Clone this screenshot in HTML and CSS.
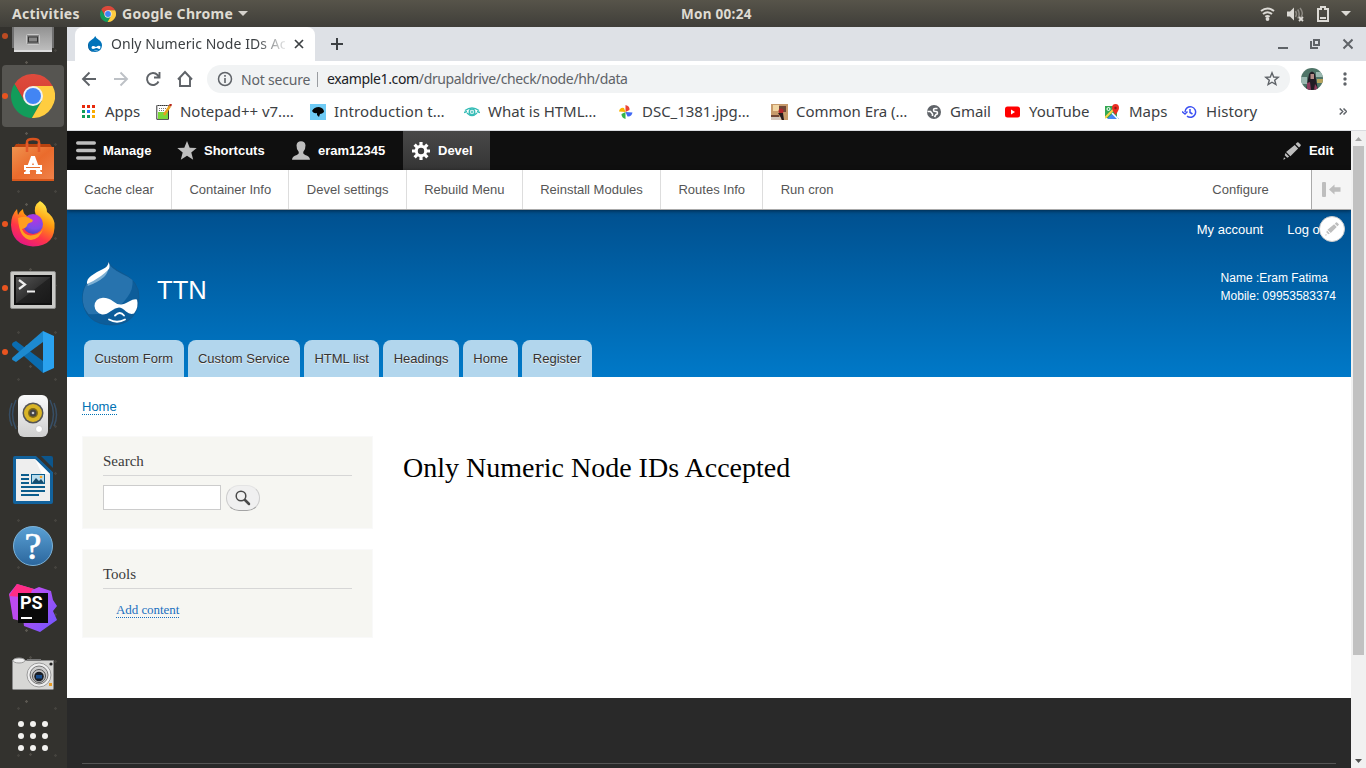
FILE: index.html
```html
<!DOCTYPE html>
<html lang="en">
<head>
<meta charset="utf-8">
<title>Only Numeric Node IDs Accepted</title>
<link rel="stylesheet" href="styles.css">
</head>
<body>
<svg class="defs" width="0" height="0" aria-hidden="true">
  <defs>
    <linearGradient id="gRed" x1="0" y1="0" x2="0" y2="1"><stop offset="0" stop-color="#de4b3d"/><stop offset="1" stop-color="#d63f31"/></linearGradient>
    <linearGradient id="gGrey" x1="0" y1="0" x2="0" y2="1"><stop offset="0" stop-color="#777"/><stop offset="1" stop-color="#bdbdbd"/></linearGradient>
    <linearGradient id="gBag" x1="0" y1="0" x2="1" y2="1"><stop offset="0" stop-color="#f0934f"/><stop offset=".5" stop-color="#ea6b2c"/><stop offset="1" stop-color="#f0824a"/></linearGradient>
    <linearGradient id="gFox" x1=".8" y1="0" x2=".3" y2="1"><stop offset="0" stop-color="#fff44f"/><stop offset=".4" stop-color="#ff980e"/><stop offset=".7" stop-color="#ff3647"/><stop offset="1" stop-color="#e31587"/></linearGradient>
    <radialGradient id="gGlobe" cx=".6" cy=".2" r=".9"><stop offset="0" stop-color="#b833e1"/><stop offset=".6" stop-color="#7b4be8"/><stop offset="1" stop-color="#4a3cb8"/></radialGradient>
    <linearGradient id="gTerm" x1="0" y1="0" x2="1" y2="1"><stop offset="0" stop-color="#555"/><stop offset=".5" stop-color="#333"/><stop offset=".52" stop-color="#222"/><stop offset="1" stop-color="#191919"/></linearGradient>
    <linearGradient id="gWhite" x1="0" y1="0" x2="0" y2="1"><stop offset="0" stop-color="#fafafa"/><stop offset="1" stop-color="#cfcfcf"/></linearGradient>
    <linearGradient id="gHelp" x1="0" y1="0" x2="0" y2="1"><stop offset="0" stop-color="#5aa0d4"/><stop offset="1" stop-color="#2b669d"/></linearGradient>
    <linearGradient id="gPs" x1="0" y1="0" x2="1" y2="1"><stop offset="0" stop-color="#d04cf0"/><stop offset="1" stop-color="#6b57ff"/></linearGradient>
    <symbol id="chrome" viewBox="2 2 44 44">
      <path fill="url(#gRed)" d="M24 14H43.6A22 22 0 0 0 5.54 12.03L15.34 29Z"/>
      <path fill="#129c5a" d="M32.66 29L15.34 29 5.54 12.03A22 22 0 0 0 22.86 45.97Z"/>
      <path fill="#ffcd40" d="M24 14H43.6A22 22 0 0 1 22.86 45.97L32.66 29Z"/>
      <circle cx="24" cy="24" r="10" fill="#f1f1f1"/><circle cx="24" cy="24" r="8" fill="#4285f4"/>
    </symbol>
    <symbol id="pencil" viewBox="0 0 18 18">
      <path d="M12.6 2.1l1.5-1.5q.7-.7 1.4 0l2 2q.7.7 0 1.4L16 5.500zM11.700 3l3.400 3.400-7.700 7.900-4.300-4.200zM2.500 11l3.700 3.800-2 .9-2.500-2.500zM1 15.300l1.600 1.400-2.300 1z"/>
    </symbol>
  </defs>
</svg>

<header class="topbar">
  <span class="activities">Activities</span>
  <svg class="app-icon" width="16" height="16"><use href="#chrome"/></svg>
  <span class="app-name">Google Chrome</span>
  <svg class="app-caret" width="10" height="6"><path fill="#d5d2cc" d="M0 0h10L5 5z"/></svg>
  <span class="clock">Mon 00:24</span>
  <svg class="tray-icons" width="94" height="18" viewBox="0 0 94 18">
    <g fill="none" stroke="#dcdad5" stroke-width="2"><path d="M1 6q6.500-5 13 0M3 9q4.500-3.500 9 0M5.300 11.800q2.200-1.600 4.400 0"/></g>
    <circle cx="7.500" cy="14" r="1.900" fill="#dcdad5"/>
    <path fill="#dcdad5" d="M27 6.500h3l4-4v13l-4-4h-3z"/>
    <g fill="none" stroke="#8b8881" stroke-width="1.500"><path d="M35.500 6q2 3 0 6M37.700 4.500q3 4.500 0 9M40 3q4 5 1 9"/></g>
    <path stroke="#dcdad5" stroke-width="1.800" d="M39 12l4 4m0-4l-4 4"/>
    <path fill="none" stroke="#dcdad5" stroke-width="2" d="M61 4V2h4v2h3v12H58V4z"/>
    <path fill="#dcdad5" d="M60 12h6v2h-6zM81 6h10l-5 5z"/>
  </svg>
</header>

<div class="desktop">
  <nav class="dock">
    <div class="dock-item files"><i class="dot"></i><svg width="44" height="44" viewBox="0 0 44 44"><path fill="#6f6f6f" d="M1 6h42v33H1z"/><path fill="url(#gGrey)" d="M3 4h38v37H3z"/><path fill="#ddd" d="M3 41h38v2H3z"/><rect x="15.500" y="25.500" width="13" height="10" rx="1" fill="#888" stroke="#c9c9c9"/><rect x="17.500" y="28" width="9" height="5" fill="none" stroke="#333"/></svg></div>
    <div class="dock-item active"><i class="dot"></i><svg width="44" height="44"><use href="#chrome"/></svg></div>
    <div class="dock-item store"><svg width="44" height="46" viewBox="0 0 44 46"><path fill="#b9420f" d="M5 8h34l4 6H1z"/><path fill="none" stroke="#d9531e" stroke-width="2.500" d="M16 17V6q0-3 6-3t6 3v11"/><path fill="url(#gBag)" d="M1 11h42v33H1z"/><path fill="#d8581c" d="M1 43h42v2H1z"/><path fill="none" stroke="#e4592a" stroke-width="2.500" d="M16 16V7m12 9V7"/><path fill="none" stroke="#fff" stroke-width="4" d="M16 37l5.500-15h1L28 37"/><path fill="#fff" d="M13 29h18v5H13zM13 36h6v2h-6zM25 36h6v2h-6z"/><path fill="#e8702f" d="M15 31h14v1H15z"/></svg></div>
    <div class="dock-item store"><i class="dot"></i><svg width="46" height="47" viewBox="0 0 46 47"><path fill="url(#gFox)" d="M30 1q7 4 7 11 6 4 7.500 11Q46 46 23 46.500 2 45 1 25 1 15 7 9l1 6q2-4 5-6 0 5 4 7 5-1 9 0-4-10 4-15"/><circle cx="23" cy="24" r="10" fill="url(#gGlobe)"/><path fill="#ff9d20" d="M8 18q9-3 13 1 3 1 1 3-5 1-5 4-2 3-5 3 3 8 12 6 6-1 9-6-3 10-12 11Q9 39 8 18"/></svg></div>
    <div class="dock-item low"><i class="dot"></i><svg width="46" height="38" viewBox="0 1 46 38"><rect x=".5" y="1.500" width="45" height="37" rx="1.500" fill="#c9c9c6" stroke="#8d8d8b"/><rect x="4" y="5" width="38" height="30" fill="#111"/><rect x="6" y="7" width="34" height="26" fill="url(#gTerm)"/><path fill="none" stroke="#eee" stroke-width="2.200" d="M9 10l6 4.500-6 4.500M17 21.500h8"/></svg></div>
    <div class="dock-item"><i class="dot"></i><svg width="44" height="44" viewBox="0 0 44 44"><path fill="#0a6cb0" d="M1 14.500q0-1 1-2L5 11l27 20v12L1.500 16z"/><path fill="#1d8ad0" d="M1 28.500q0 1 .500 1.500L5 32 32 12V1L1.500 27.500z"/><path fill="#2aa2ef" d="M32 1l11 5v32l-11 5z"/></svg></div>
    <div class="dock-item"><svg width="50" height="46" viewBox="0 0 50 46"><g fill="none" stroke="#3a5878" stroke-width="1.500" opacity=".75"><path d="M8 7q-7 14 0 29M4 10q-5 12 0 23M42 7q7 14 0 29M46 10q5 12 0 23"/></g><rect x="10" y="2" width="30" height="42" rx="6" fill="url(#gWhite)"/><circle cx="25" cy="20" r="10.500" fill="#555"/><circle cx="25" cy="20" r="9" fill="#d9b526"/><circle cx="25" cy="20" r="5" fill="#846c15"/><circle cx="25" cy="20" r="3.500" fill="#444"/><circle cx="25" cy="20" r="1.300" fill="#ccc"/><circle cx="31" cy="36" r="3.500" fill="#fff" stroke="#ccc"/></svg></div>
    <div class="dock-item"><svg width="40" height="48" viewBox="0 0 40 48"><path fill="#12629c" d="M2 0h22l16 16v30q0 2-2 2H2q-2 0-2-2V2q0-2 2-2z"/><path fill="#33322f" d="M23 0h17v16z"/><path fill="#0d568c" d="M28 0h10q2 0 2 2v10z"/><path fill="#eee" d="M3 3h19l15 15v27H3z"/><path fill="#fff" d="M22 3l15 15H29z"/><path fill="#0c5d8d" d="M8 18h8v2H8zM8 22h8v2H8zM8 26h8v2H8zM8 30h24v2H8zM8 34h24v2H8zM8 38h18v2H8zM18 18h14v10H18z"/><path fill="#b9dced" d="M19 19h12v8H19z"/><path fill="#174b6d" d="M19 27l4-5 3 3 2-2 3 4z"/><circle cx="28" cy="21" r="1.300" fill="#ffa928"/></svg></div>
    <div class="dock-item low"><svg width="42" height="42" viewBox="0 0 42 42"><circle cx="21" cy="21" r="19.500" fill="url(#gHelp)" stroke="#7db3d9"/><text x="21" y="33.500" text-anchor="middle" class="help-mark">?</text></svg></div>
    <div class="dock-item"><svg width="50" height="50" viewBox="0 0 50 50"><path fill="#bd4af0" d="M1 11L9 1l17 5-2 35-19-5z"/><path fill="#ff2d84" d="M1 13L9 1l17 5v9z"/><path fill="url(#gPs)" d="M24 7l7-3 12 4 2 9 4 6-4 5 4 9-17 12-16-6-1-8z"/><path fill="#090909" d="M10 10h30v30H10z"/><text x="12" y="26" class="ps-mark">PS</text><path fill="#fff" d="M13 34h11v2H13z"/></svg></div>
    <div class="dock-item low"><svg width="44" height="34" viewBox="0 0 44 34"><path fill="#d7d7d5" stroke="#888" d="M1.500 3.500h41v28q0 1-1 1h-39q-1 0-1-1z"/><ellipse cx="8" cy="3.500" rx="6" ry="2.500" fill="#eee" stroke="#999"/><path fill="#777" d="M16 2h14v2H16z"/><circle cx="28" cy="18" r="12" fill="#eee" stroke="#9b9b9b"/><circle cx="28" cy="18" r="9" fill="#ccc" stroke="#777"/><circle cx="28" cy="19" r="6.500" fill="#c4c4c4" stroke="#555"/><circle cx="28" cy="19.500" r="4.800" fill="#191d24"/><rect x="25" y="18" width="6" height="3.500" fill="#174c8c"/><circle cx="40" cy="7" r="1.600" fill="#222"/><rect x="38" y="26" width="3" height="3" fill="#e79b24"/></svg></div>
    <div class="dock-item"><svg width="32" height="32" viewBox="0 0 32 32" fill="#f2f1ef"><circle cx="4" cy="4" r="3"/><circle cx="16" cy="4" r="3"/><circle cx="28" cy="4" r="3"/><circle cx="4" cy="16" r="3"/><circle cx="16" cy="16" r="3"/><circle cx="28" cy="16" r="3"/><circle cx="4" cy="28" r="3"/><circle cx="16" cy="28" r="3"/><circle cx="28" cy="28" r="3"/></svg></div>
  </nav>

  <main class="browser">
    <div class="tabstrip">
      <div class="tab">
        <svg width="14" height="16" viewBox="0 0 14 16"><path fill="#0073ba" d="M7.200 0Q8 2.500 11 4q3 2 3 5.500Q13.500 16 7 16 .5 16 0 9.500 0 6 3 4.200 6.500 2.500 7.200 0z"/><path fill="#004f8a" d="M1 6q-2 8 5 10-6 0-6-7z"/><path fill="#fff" d="M3.500 11.500q.5-2.500 4.500-.5 3-2 4.500-.5 0 3-1.500 2.500-2-1.500-3-1-4.500 2-4.500-.5M6 14.300q2 .8 4 0l-1 .8H7z"/></svg>
        <span class="tab-title">Only Numeric Node IDs Accepted</span>
        <svg width="10" height="10" viewBox="0 0 10 10"><path stroke="#3c4043" stroke-width="1.700" d="M1 1l8 8M9 1L1 9"/></svg>
      </div>
      <svg class="new-tab" width="12" height="12" viewBox="0 0 12 12"><path stroke="#3c4043" stroke-width="2" d="M6 0v12M0 6h12"/></svg>
      <svg class="window-buttons" width="76" height="12" viewBox="0 0 76 12"><g fill="none" stroke="#5f6368" stroke-width="2"><path d="M1 10h10M37 2h5v5h-5zM34 3v7h7"/><path d="M66.500 1.500l9 9m0-9l-9 9"/></g></svg>
    </div>

    <div class="toolbar">
      <svg class="nav-icons" width="112" height="20" viewBox="0 0 112 20" fill="none" stroke="#5f6368" stroke-width="1.900"><path d="M15 10H2M8.500 3.500L2 10l6.500 6.500"/><path stroke="#bdc1c6" d="M33 10h13M39.500 3.500L46 10l-6.500 6.500"/><path d="M77.500 12.500A6 6 0 1 1 76.500 6l1.500 2M78.500 3v5.500H73"/><path d="M97 10.500L104 3l7 7.500M99 9v8h10V9"/></svg>
      <div class="omnibox">
        <svg width="16" height="16" viewBox="0 0 16 16"><circle cx="8" cy="8" r="6.500" fill="none" stroke="#5f6368" stroke-width="1.500"/><path fill="#5f6368" d="M7.200 7h1.600v5H7.200zM7.200 4h1.600v1.700H7.200z"/></svg>
        <span class="not-secure">Not secure</span>
        <span class="url"><b>example1.com</b><span class="url-path">/drupaldrive/check/node/hh/data</span></span>
        <svg class="star" width="16" height="16" viewBox="0 0 16 16"><path fill="none" stroke="#5f6368" stroke-width="1.400" d="M8 1.800l1.700 4.200 4.500.3-3.500 2.900 1.200 4.400L8 11.200l-3.900 2.400 1.200-4.400-3.500-2.900 4.500-.3z"/></svg>
      </div>
      <svg class="avatar" width="22" height="22" viewBox="0 0 22 22"><clipPath id="av"><circle cx="11" cy="11" r="11"/></clipPath><g clip-path="url(#av)"><path fill="#4e7467" d="M0 0h22v22H0z"/><path fill="#9ab8b0" d="M0 9h6v7H0zM15 4h7v5h-7z"/><path fill="#b7a35c" d="M16 11h6v4h-6z"/><path fill="#201b24" d="M8 6q3-5 6 0l3 16H5z"/><path fill="#b28b87" d="M9.500 6h3.500v5H9.500z"/><path fill="#8d3a5c" d="M6 15l3-1 1 8H6zM14 16l2 3v3h-3z"/></g></svg>
      <svg class="kebab" width="4" height="14" viewBox="0 0 4 14" fill="#5f6368"><circle cx="2" cy="2" r="1.700"/><circle cx="2" cy="7" r="1.700"/><circle cx="2" cy="12" r="1.700"/></svg>
    </div>

    <div class="bookmarks">
      <div class="bm bm-apps"><svg width="14" height="14" viewBox="0 0 14 14"><path fill="#e8290b" d="M0 0h3v3H0zM5 0h3v3H5zM10 0h3v3h-3z"/><path fill="#0f9d58" d="M0 5h3v3H0zM0 10h3v3H0zM5 10h3v3H5z"/><path fill="#2979ff" d="M5 5h3v3H5z"/><path fill="#f9ab00" d="M10 5h3v3h-3zM10 10h3v3h-3z"/></svg><span>Apps</span></div>
      <div class="bm bm-wide"><svg width="16" height="16" viewBox="0 0 16 16"><path fill="#fff" stroke="#333" d="M.8 1.500h11.700v13.800H.8z"/><path fill="#79d93a" d="M2 8h10v7H2z"/><path stroke="#777" stroke-dasharray="1 1" d="M1 1.500h12M3 4.500h7M3 6.500h6"/><path stroke="#e8a11c" stroke-width="2.500" d="M14 2l-6 9"/><path stroke="#b7281c" stroke-width="2.500" d="M15 0l-1 2"/></svg><span>Notepad++ v7.…</span></div>
      <div class="bm bm-wide"><svg width="16" height="16" viewBox="0 0 16 16"><path fill="#6fcbf5" d="M0 0h16v16H0z"/><path fill="#050505" d="M2 7q2-4 7-4 5 1 5 5-2 2-4 2l-1 3-2-2V9q-3 1-5-2"/></svg><span class="t-intro">Introduction t…</span></div>
      <div class="bm bm-wide"><svg width="16" height="16" viewBox="0 0 16 16" fill="none" stroke="#35bcb6"><path stroke-width="1.400" d="M1 6.500q7-5 14 0M3 9q5 5 10 0M0 8.500l3-1m13 1l-3-1"/><circle cx="8" cy="8" r="2.800" stroke-width="1.300"/><circle cx="8" cy="8" r="1"/></svg><span>What is HTML…</span></div>
      <div class="bm bm-dsc"><svg width="16" height="16" viewBox="0 0 16 16"><path fill="#ea4335" d="M7.500 1Q12 2 11.500 6L7.500 8z"/><path fill="#4169f5" d="M14.500 8.500q-1 4.500-5 4l-2-4.500z"/><path fill="#34b44a" d="M7.500 15q-4-1-4-5l4-2z"/><path fill="#fbb400" d="M1 7.500q1-4.500 5-3.500l1.500 4z"/></svg><span>DSC_1381.jpg…</span></div>
      <div class="bm bm-era"><svg width="17" height="16" viewBox="0 0 17 16"><path fill="#c79a6b" d="M0 0h17v16H0z"/><path fill="#f1d5a2" d="M2 1h6v6H2z"/><path fill="#704636" d="M8 2h7v6H8zM0 11h8v2H0z"/><path fill="#d4c7be" d="M0 13h10v3H0z"/><circle cx="10" cy="7" r="2.500" fill="#b2262b"/><path fill="#271a1d" d="M7 9h5l1 7h-2l-2-4z"/></svg><span>Common Era (…</span></div>
      <div class="bm bm-gmail"><svg width="16" height="16" viewBox="0 0 16 16"><circle cx="8" cy="8" r="7" fill="#5f6368"/><path fill="none" stroke="#fff" stroke-width="1.600" d="M11.500 4.500H9q-1.500 0-1.500 1.500T9 7.500h1q1.500 0 1.500 1.500T10 10.500L8.500 13M1.500 7.500h3l2 2.500v2"/></svg><span>Gmail</span></div>
      <div class="bm bm-yt"><svg width="16" height="16" viewBox="0 0 16 16"><rect y="2.500" width="15" height="11" rx="2.500" fill="#f00"/><path fill="#fff" d="M6 5.500v5L10 8z"/></svg><span>YouTube</span></div>
      <div class="bm bm-maps"><svg width="16" height="16" viewBox="0 0 16 16"><path fill="#34a853" d="M0 2h12v12H0z"/><path fill="#4285f4" d="M2 15l6-6 6 6z"/><path stroke="#fbd34b" stroke-width="2" d="M0 14L10 4"/><path stroke="#fff" stroke-width="1.500" d="M7 9l6 6"/><circle cx="3.500" cy="5" r="1.500" fill="none" stroke="#fff"/><path fill="#ea2e22" d="M7 4q0-4 3.500-4T14 4q0 2-3.500 7Q7 6 7 4"/><circle cx="10.500" cy="4" r="1.200" fill="#8e1714"/></svg><span>Maps</span></div>
      <div class="bm"><svg width="16" height="16" viewBox="0 0 16 16" fill="none" stroke="#3b50f2" stroke-width="1.500"><path d="M3 8a5.300 5.300 0 1 1 2 4.200M0 7.500L3 10l2.500-2.500M8 5v3.500l2.500 1.500"/></svg><span class="t-intro">History</span></div>
      <svg class="overflow" width="8" height="7" viewBox="0 0 8 7"><path fill="none" stroke="#5f6368" stroke-width="1.500" d="M.7.500l3 3-3 3M4.500.500l3 3-3 3"/></svg>
    </div>

    <div class="viewport">
      <div class="page">
        <nav class="admin-bar">
          <a class="manage"><svg width="20" height="19" viewBox="0 0 20 19"><path stroke="#bebebe" stroke-width="3.400" stroke-linecap="round" d="M1.700 2h16.600M1.700 9.500h16.600M1.700 17h16.600"/></svg>Manage</a>
          <a class="shortcuts"><svg width="20" height="20" viewBox="0 0 20 20"><path fill="#bebebe" d="M10 0l2.700 6.800 7 .3-5.400 4.500 1.900 7.200-6.200-4-6.200 4 1.900-7.200L.3 7.100l7-.3z"/></svg>Shortcuts</a>
          <a class="user"><svg width="20" height="20" viewBox="0 0 20 20"><path fill="#bebebe" d="M10 .3q4 0 4.500 4 .2 4-2.300 6.700-.5 2 2 3 4.500 1 4.800 4.800H1q.3-3.800 4.800-4.800 2.500-1 2-3Q5.300 8.300 5.500 4.300q.5-4 4.500-4"/></svg>eram12345</a>
          <a class="devel"><svg width="18" height="18" viewBox="0 0 18 18"><circle cx="9" cy="9" r="4.700" fill="none" stroke="#fff" stroke-width="3"/><path stroke="#fff" stroke-width="3.200" d="M9 0v4M9 14v4M0 9h4M14 9h4M2.600 2.600l2.700 2.700M12.700 12.700l2.700 2.700M15.400 2.600l-2.700 2.700M5.300 12.700l-2.700 2.700"/></svg>Devel</a>
          <a class="edit"><svg width="18" height="18" fill="#bebebe"><use href="#pencil"/></svg>Edit</a>
        </nav>
        <nav class="tray">
          <a>Cache clear</a><a>Container Info</a><a>Devel settings</a><a>Rebuild Menu</a><a>Reinstall Modules</a><a>Routes Info</a><a>Run cron</a>
          <a class="configure">Configure</a>
          <span class="orientation"><svg width="20" height="16" viewBox="0 0 20 16" fill="#bebebe"><rect x="1" y="0" width="4" height="15" rx="1"/><path d="M8 7.500L13.500 2.500v2.700H19.500v4.600h-6v2.700z"/></svg></span>
        </nav>
        <header class="site-header">
          <div class="account"><a>My account</a><a class="logout">Log out</a><span class="contextual"><svg width="14" height="14" fill="#bebebe"><use href="#pencil"/></svg></span></div>
          <div class="branding">
            <svg width="58" height="65" viewBox="0 0 58 65"><path fill="#0d5d9a" stroke="#14568a" stroke-width=".7" d="M27 1q1 5 13 11 17 8 17 24Q56 64 29 64 2 63 .500 37 .500 22 14 13.500 26 7 27 1z"/><path fill="#2773ae" d="M27 2q1 5 13 11 7 3 10.500 6 1 9-5 17-8 12-19 15-10 3-20 2Q.500 46 .700 37 1 22 14 14 26 8 27 2z"/><path fill="#7db0d4" d="M5.500 25Q15 22 22 16q4-4 4-8L6 22z"/><path fill="#fff" d="M5 23Q4.500 18 9 15q5-4 12-7 5-2 5.700-7 2 6-.7 8-3 3-7 6-7 5-14 8zM12.500 45Q13 37 21 36.700q6 0 10 3.500t8 3.300q3 0 8-3 5-3 8-2 2 8-3 14-4 1.500-8-2-4-4-7-4-4 0-8 3.500-5 4-9 3.500-7-2-7.500-8.500"/><path fill="none" stroke="#fff" stroke-width="1.800" stroke-linecap="round" d="M33 54.500q5-5 9 0M27 58.500q8 4.500 16 0"/></svg>
            <h1>TTN</h1>
            <p>Name :Eram Fatima<br>Mobile: 09953583374</p>
          </div>
          <nav class="menu"><a>Custom Form</a><a>Custom Service</a><a>HTML list</a><a>Headings</a><a>Home</a><a>Register</a></nav>
        </header>
        <div class="breadcrumb"><a>Home</a></div>
        <div class="columns">
          <aside>
            <section class="block search"><h2>Search</h2><div class="search-row"><input type="text" aria-label="Search"><button aria-label="Search"><svg width="16" height="16" viewBox="0 0 16 16" fill="none" stroke="#4a4a4a"><circle cx="6" cy="6" r="4.800" stroke-width="1.500"/><path stroke-width="2.500" stroke-linecap="round" d="M10 10l4 4"/></svg></button></div></section>
            <section class="block tools"><h2>Tools</h2><a>Add content</a></section>
          </aside>
          <article>Only Numeric Node IDs Accepted</article>
        </div>
        <footer><div></div></footer>
      </div>
      <div class="scrollbar">
        <svg width="15" height="15" viewBox="0 0 15 15"><path fill="#a3a3a3" d="M4 10h7L7.500 6z"/></svg>
        <div class="thumb"></div>
        <svg width="15" height="15" viewBox="0 0 15 15"><path fill="#505050" d="M4 6h7L7.500 10z"/></svg>
      </div>
    </div>
  </main>
</div>
</body>
</html>
```
FILE: styles.css
```css
* { box-sizing: border-box; }
body { margin: 0; width: 1366px; height: 768px; overflow: hidden; font-family: "Liberation Sans", Arial, sans-serif; display: flex; flex-direction: column; }
svg { display: block; flex: none; }
.defs { position: absolute; }
h1, h2, p { margin: 0; font-weight: normal; }

.topbar { position: relative; flex: none; height: 27px; display: flex; align-items: center; padding: 0 12px; background: linear-gradient(#57544a, #3f3e39); color: #dfdbd2; font: bold 14px "Noto Sans", sans-serif; letter-spacing: .28px; white-space: nowrap; }
.activities { width: 88px; }
.app-name { margin-left: 6px; width: 111px; }
.app-caret { margin-left: 5px; }
.clock { position: absolute; left: 681px; font-size: 13.500px; }
.tray-icons { margin-left: auto; }

.desktop { flex: 1; min-height: 0; display: flex; }
.dock { width: 67px; flex: none; overflow: hidden; display: flex; flex-direction: column; justify-content: flex-end; background-color: #33322e; background-image: radial-gradient(circle, #5a5750 0 1px, transparent 1.500px), radial-gradient(circle, #45433e 0 1px, transparent 1.500px), radial-gradient(circle, #4e4b45 0 1px, transparent 1.500px); background-size: 53px 71px, 37px 47px, 61px 97px; }
.dock-item { position: relative; height: 64px; flex: none; display: flex; align-items: center; justify-content: center; margin-right: 1px; }
.dock-item.active::before { content: ""; position: absolute; inset: 1px 2px; border-radius: 4px; background: #565551; }
.dock-item svg { position: relative; }
.dot { position: absolute; z-index: 1; left: 2px; top: 29px; width: 6px; height: 6px; border-radius: 50%; background: #e95420; }
.files .dot { top: 33px; opacity: .75; }
.files svg, .store svg { margin-bottom: 2px; }
.low svg { margin-top: 3px; }
.help-mark { font: 38px "Liberation Serif", serif; fill: #fff; stroke: #fff; stroke-width: .7px; }
.ps-mark { font: bold 18px Roboto, sans-serif; fill: #fff; }

.browser { flex: 1; min-width: 0; display: flex; flex-direction: column; background: #fff; color: #3c4043; font-family: "Noto Sans", sans-serif; }
.tabstrip { height: 34px; flex: none; display: flex; align-items: center; background: #dee1e6; padding: 0 13px 0 8px; }
.tab { width: 240px; height: 34px; padding: 0 11px 0 13px; display: flex; align-items: center; background: #fff; border-radius: 8px 8px 0 0; font-size: 14px; }
.tab-title { width: 175px; margin: -1px 9px 0; overflow: hidden; white-space: nowrap; letter-spacing: .050px; -webkit-mask-image: linear-gradient(90deg, #000 145px, transparent 178px); }
.new-tab { margin-left: 16px; }
.window-buttons { margin-left: auto; }
.toolbar { height: 36px; flex: none; display: flex; align-items: center; padding: 0 19px 0 14px; }
.omnibox { width: 1083px; height: 28px; margin-left: 14px; padding: 0 10px; border-radius: 14px; display: flex; align-items: center; background: #f1f3f4; font-size: 14px; white-space: nowrap; }
.not-secure { width: 77px; margin-left: 8px; border-right: 1px solid #9a9da1; line-height: 15px; letter-spacing: -.200px; color: #5f6368; }
.url { margin: -1px 0 0 9px; letter-spacing: -.360px; color: #5f6368; }
.url b { font-weight: normal; color: #202124; }
.star { margin-left: auto; }
.avatar { margin-left: 11px; }
.kebab { margin-left: auto; }
.bookmarks { height: 34px; flex: none; display: flex; align-items: center; padding: 0 19px 4px 15px; border-bottom: 1px solid #dadce0; font-size: 15px; white-space: nowrap; }
.bm { display: flex; align-items: center; gap: 8px; }
.bm span { margin-top: -1px; letter-spacing: -.030px; }
.bm .t-intro { letter-spacing: .100px; }
.bm-apps { width: 74px; gap: 9px; }
.bm-wide { width: 154px; }
.bm-dsc { width: 153px; }
.bm-era { width: 155px; }
.bm-gmail { width: 79px; }
.bm-yt { width: 100px; }
.bm-maps { width: 77px; }
.overflow { margin-left: auto; }

.viewport { flex: 1; min-height: 0; display: flex; font-family: "Liberation Sans", Arial, sans-serif; }
.page { flex: 1; display: flex; flex-direction: column; overflow: hidden; }
.scrollbar { width: 15px; background: #f1f1f1; display: flex; flex-direction: column; justify-content: space-between; }
.thumb { height: 509px; margin: 0 2px auto 2px; background: #c1c1c1; }

.admin-bar { height: 39px; flex: none; display: flex; background: #0f0f0f; color: #fff; font-size: 13px; font-weight: bold; }
.admin-bar a { display: flex; align-items: center; }
.manage { width: 101px; padding-left: 9px; gap: 7px; }
.shortcuts { width: 114px; padding-left: 9px; gap: 7px; }
.user { width: 121px; padding-left: 9px; gap: 7px; }
.devel { width: 87px; padding-left: 9px; gap: 8px; background: linear-gradient(#484848, #353535); }
.edit { margin-left: auto; padding-right: 17.500px; gap: 8px; }
.tray { position: relative; z-index: 1; height: 40px; flex: none; display: flex; background: #fff; border-bottom: 1px solid #aaa; box-shadow: 0 1px 4px rgba(0, 0, 0, .5); font-size: 13px; color: #565656; }
.tray a { padding: 0 17.360px; line-height: 39px; border-right: 1px solid #ddd; }
.tray a:nth-child(7) { border: 0; }
.tray .configure { margin-left: auto; border: 0; padding-right: 42.300px; }
.orientation { width: 40px; border-left: 1px solid #aaa; background: #f5f5f5; display: flex; align-items: center; padding-left: 9px; }

.site-header { height: 167px; flex: none; display: flex; flex-direction: column; background: linear-gradient(#00508f, #0079c8); color: #fff; }
.account { position: relative; height: 40px; display: flex; justify-content: flex-end; gap: 24px; padding: 12px 20.400px 0 0; font-size: 13px; }
.contextual { position: absolute; right: 6px; top: 6px; width: 26px; height: 26px; border-radius: 50%; border: 1px solid #ccc; background: #fff; display: flex; align-items: center; justify-content: center; }
.branding { height: 90px; display: flex; padding: 11px 15px 0; }
.branding h1 { margin: 14px 0 0 17px; font-size: 25.600px; line-height: 30px; }
.branding p { margin: 8px 0 0 auto; font-size: 12px; line-height: 18px; }
.menu { height: 37px; display: flex; gap: 4px; padding-left: 17px; font-size: 13px; color: #333; text-shadow: 0 1px #eee; }
.menu a { height: 37px; line-height: 37px; padding: 0 10.400px; border-radius: 8px 8px 0 0; background: #b2d6ed; }

.breadcrumb { height: 59px; flex: none; padding: 22px 15px; font-size: 13px; line-height: 15px; }
.breadcrumb a, .tools a { color: #0071b3; border-bottom: 1px dotted; }
.columns { height: 262px; flex: none; display: flex; padding-left: 15px; }
aside { width: 291px; font-family: "Liberation Serif", serif; }
.block { padding: 16px 20px; background: #f6f6f2; border: 1px solid #f9f9f9; margin-bottom: 20px; }
.block h2 { height: 23px; border-bottom: 1px solid #d6d6d6; font-size: 15px; line-height: 17px; color: #3b3b3b; }
.search { height: 93px; }
.tools { height: 89px; }
.tools a { display: inline-block; margin: 13px 0 0 13px; font-size: 13px; letter-spacing: -.060px; line-height: 15px; color: #1a6fc0; }
.search-row { display: flex; margin-top: 9px; }
.search-row input { width: 118px; height: 25px; border: 1px solid #ccc; padding: 2px; background: #fff; }
.search-row button { width: 34px; height: 26px; margin-left: 5px; padding: 0 0 1px 7.500px; border: 1px solid #ccc; border-top-color: #e4e4e4; border-bottom-color: #a4a4a4; border-radius: 13px; background: #f0f0f0; }
article { margin: 16px 0 0 30px; font: 28px/32px "Liberation Serif", serif; color: #000; }
footer { flex: 1; background: #292929; padding: 65px 15px 0; }
footer div { border-top: 1px solid #555; }
```
